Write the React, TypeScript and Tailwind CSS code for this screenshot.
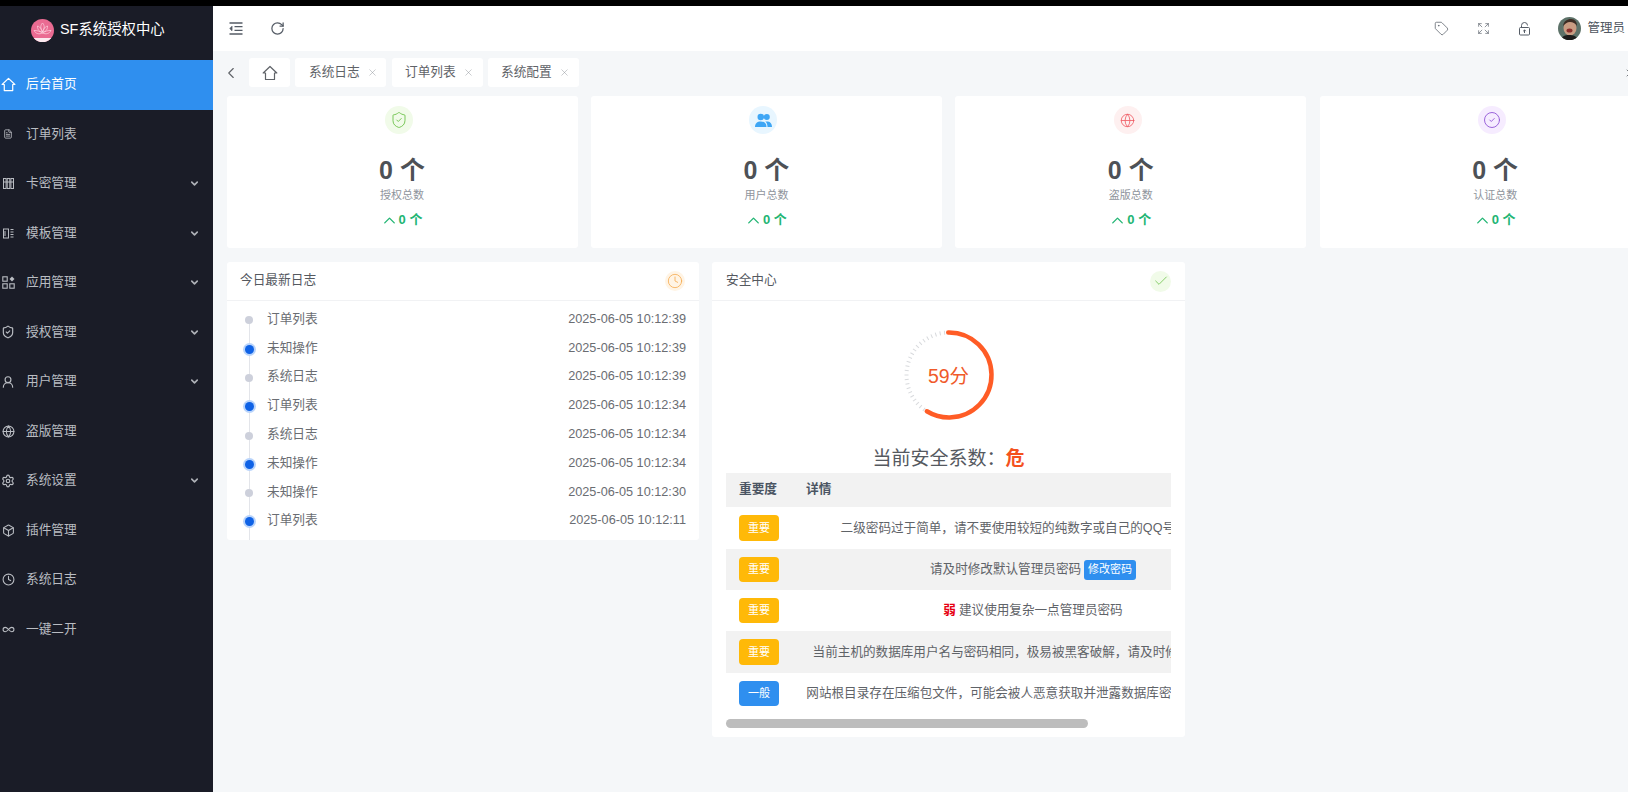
import {
  ChevronDown,
  ChevronLeft,
  ChevronUp,
  CircleCheck,
  Check,
  Clock,
  Expand,
  FileText,
  Globe,
  Infinity as InfinityIcon,
  RotateCw,
  Settings,
  ShieldCheck,
  Tag,
  UserRound,
  Box,
  X,
} from "lucide-react";

function HomeOutline({ size, sw = 1.2 }: { size: number; sw?: number }) {
  return (
    <svg width={size} height={size} viewBox="0 0 16 16" fill="none" stroke="currentColor" strokeWidth={sw} strokeLinejoin="round">
      <path d="M8 1.500L1.200 8h2.300v6.500h9V8h2.300z" />
    </svg>
  );
}

function OutdentIcon() {
  return (
    <svg width="14" height="13" viewBox="0 0 14 13" fill="none" stroke="currentColor" strokeWidth="1.300">
      <path d="M0.500 1h13M5.500 4.700h8M5.500 8.300h8M0.500 12h13" />
      <path d="M3 4.300L0.800 6.500 3 8.700z" fill="currentColor" strokeWidth="0.800" />
    </svg>
  );
}

function CardKeyIcon() {
  return (
    <svg width="11" height="11" viewBox="0 0 11 11" fill="none" stroke="currentColor" strokeWidth="1">
      <rect x="0.5" y="0.5" width="2.6" height="10" />
      <rect x="4.2" y="0.5" width="2.6" height="10" />
      <rect x="7.9" y="0.5" width="2.6" height="10" />
      <path d="M0.5 4h10" />
    </svg>
  );
}

function TemplateIcon() {
  return (
    <svg width="11" height="11" viewBox="0 0 11 11" fill="none" stroke="currentColor" strokeWidth="1">
      <rect x="0.5" y="1" width="5" height="9" />
      <path d="M7.500 1.500h3M7.500 4h3M7.500 6.500h3M7.500 9h3" />
      <path d="M2 3v5" />
    </svg>
  );
}

function AppsIcon() {
  return (
    <svg width="13" height="13" viewBox="0 0 13 13" fill="none" stroke="currentColor" strokeWidth="1.1">
      <rect x="0.8" y="0.8" width="4.4" height="4.4" />
      <rect x="0.8" y="7.8" width="4.4" height="4.4" />
      <rect x="7.8" y="7.8" width="4.4" height="4.4" />
      <path d="M10 0.5l2.5 2.5-2.5 2.5-2.5-2.5z" fill="currentColor" stroke="none" />
    </svg>
  );
}

function OpenLockIcon() {
  return (
    <svg width="13" height="14" viewBox="0 0 13 14" fill="none" stroke="#555c66" strokeWidth="1">
      <rect x="1.5" y="5.5" width="10" height="7.5" rx="1" />
      <path d="M3.500 5.500V3.500a3 3 0 0 1 6 0" />
      <path d="M6.500 11V8M5.200 9.200l1.300-1.300 1.300 1.300" />
    </svg>
  );
}

function LotusLogo() {
  return (
    <div className="relative h-[23px] w-[23px] overflow-hidden rounded-full bg-[#ea6b92]">
      <svg width="23" height="23" viewBox="0 0 23 23" fill="none" stroke="#ffd9e4" strokeWidth="0.7">
        <path d="M11.500 4c2 2 2.500 5 0 9-2.500-4-2-7 0-9z" />
        <path d="M6.500 7c2 .5 3.500 2 5 6-3 0-5-2-5-6zM16.500 7c-2 .5-3.500 2-5 6 3 0 5-2 5-6z" />
        <path d="M3 11.500c3 0 5.500.5 8.500 2.500-3.500 1.500-6.500 1-8.500-2.500zM20 11.500c-3 0-5.500.5-8.500 2.500 3.500 1.500 6.500 1 8.500-2.500z" />
      </svg>
      <div className="absolute bottom-0 left-0 h-[4px] w-full bg-[#fbeaf0]" />
    </div>
  );
}

function Avatar() {
  return (
    <svg width="23" height="23" viewBox="0 0 23 23" className="shrink-0 rounded-full">
      <rect width="23" height="23" fill="#5d7269" />
      <ellipse cx="12" cy="11" rx="6.500" ry="7.500" fill="#c99c82" />
      <path d="M5 9c1-5 4-7 8-7s6 3 6 7c-2-3-4-4-7-4s-5 2-7 4z" fill="#3d2d24" />
      <ellipse cx="11.500" cy="13.500" rx="3" ry="2" fill="#8a2f2c" />
      <path d="M3 23c1-4 4-5 8-5s8 1 9 5z" fill="#1d1c1b" />
    </svg>
  );
}

const menu = [
  { label: "后台首页", icon: <HomeOutline size={15} sw={1.300} />, active: true },
  { label: "订单列表", icon: <FileText size={10} /> },
  { label: "卡密管理", icon: <CardKeyIcon />, arrow: true },
  { label: "模板管理", icon: <TemplateIcon />, arrow: true },
  { label: "应用管理", icon: <AppsIcon />, arrow: true },
  { label: "授权管理", icon: <ShieldCheck size={14} />, arrow: true },
  { label: "用户管理", icon: <UserRound size={14} />, arrow: true },
  { label: "盗版管理", icon: <Globe size={13} /> },
  { label: "系统设置", icon: <Settings size={14} />, arrow: true },
  { label: "插件管理", icon: <Box size={13} /> },
  { label: "系统日志", icon: <Clock size={13} /> },
  { label: "一键二开", icon: <InfinityIcon size={13} /> },
];

const stats = [
  {
    label: "授权总数",
    bg: "bg-[#f1fbe9]",
    icon: <ShieldCheck size={18} strokeWidth={1.200} className="text-[#6cc24a]" />,
  },
  {
    label: "用户总数",
    bg: "bg-[#e8f6ff]",
    icon: (
      <svg width="17" height="15" viewBox="0 0 17 15" fill="#3ea6f5">
        <circle cx="5.800" cy="4" r="3.300" />
        <circle cx="11.800" cy="4" r="3" />
        <path d="M0 14c0-3.500 2-5.500 5.800-5.500s5.700 2 5.700 5.500z" />
        <path d="M12.500 14c0-2.500-.7-4.300-2.200-5.500 .6-.1 1-.1 1.500-.1 3.300 0 5.200 2 5.200 5.600z" />
      </svg>
    ),
  },
  {
    label: "盗版总数",
    bg: "bg-[#fef0f0]",
    icon: <Globe size={15} strokeWidth={1.300} className="text-[#ef5a62]" />,
  },
  {
    label: "认证总数",
    bg: "bg-[#f6ecff]",
    icon: <CircleCheck size={18} strokeWidth={1.200} className="text-[#9156d6]" />,
  },
];

const logs = [
  ["订单列表", "2025-06-05 10:12:39"],
  ["未知操作", "2025-06-05 10:12:39"],
  ["系统日志", "2025-06-05 10:12:39"],
  ["订单列表", "2025-06-05 10:12:34"],
  ["系统日志", "2025-06-05 10:12:34"],
  ["未知操作", "2025-06-05 10:12:34"],
  ["未知操作", "2025-06-05 10:12:30"],
  ["订单列表", "2025-06-05 10:12:11"],
];

function StatCard({ item }: { item: (typeof stats)[number] }) {
  return (
    <div className="flex h-[152px] flex-col items-center rounded-[3px] bg-white pt-[10px]">
      <div className={`-ml-[6px] flex h-[28px] w-[28px] items-center justify-center rounded-full ${item.bg}`}>{item.icon}</div>
      <div className="mt-[20px] text-[25px] leading-[32px] font-bold text-[#4d5156]">0 个</div>
      <div className="mt-[1px] text-[11px] leading-[16px] text-[#8f949c]">{item.label}</div>
      <div className="-ml-[2px] mt-[8px] flex h-[18px] items-center text-[13px] font-semibold text-[#22b573]">
        <ChevronUp size={19} strokeWidth={1.700} />
        <span>0 个</span>
      </div>
    </div>
  );
}

function ScoreRing() {
  const ticks = Array.from({ length: 24 }, (_, i) => 216 + i * 6);
  return (
    <svg width="96" height="96" viewBox="0 0 96 96">
      {ticks.map((deg) => (
        <line
          key={deg}
          x1="48"
          y1="3.500"
          x2="48"
          y2="7.500"
          stroke="#d8dadd"
          strokeWidth="1"
          transform={`rotate(${deg} 48 48)`}
        />
      ))}
      <circle
        cx="48"
        cy="48"
        r="42.500"
        fill="none"
        stroke="#ff5c26"
        strokeWidth="4.500"
        strokeLinecap="round"
        strokeDasharray="157.300 267"
        transform="rotate(-91 48 48)"
      />
    </svg>
  );
}

function Level({ blue, h = "h-[26px]" }: { blue?: boolean; h?: string }) {
  return (
    <span
      className={`flex w-[40px] items-center justify-center rounded-[4px] text-[11px] text-white ${h} ${
        blue ? "bg-[#2f8fef]" : "bg-[#ffb908]"
      }`}
    >
      {blue ? "一般" : "重要"}
    </span>
  );
}

function TableRow({ level, gray, h, children }: { level: React.ReactNode; gray?: boolean; h: string; children: React.ReactNode }) {
  return (
    <div className={`flex items-center ${h} ${gray ? "bg-[#f2f2f2]" : "bg-white"}`}>
      <div className="w-[67px] shrink-0 pl-[13px]">{level}</div>
      <div className="flex w-[480px] shrink-0 items-center justify-center whitespace-nowrap text-[12.600px] text-[#5f6368]">
        {children}
      </div>
    </div>
  );
}

export default function App() {
  return (
    <div className="h-[792px] w-full overflow-hidden bg-[#f5f7f9] [font-family:'Liberation_Sans','Noto_Sans_CJK_SC',sans-serif]">
      <div className="h-[6px] bg-black" />
      <div className="flex h-[786px]">
        <aside className="w-[213px] shrink-0 bg-[#1a1c27]">
          <div className="mb-[6px] flex h-[48px] items-center pl-[31px]">
            <LotusLogo />
            <span className="ml-[6px] text-[14.400px] text-white">SF系统授权中心</span>
          </div>
          {menu.map((m) => (
            <div
              key={m.label}
              className={`flex h-[49.500px] items-center text-[12.700px] ${
                m.active ? "bg-[#2f8fef] text-white" : "text-[#b9bcc2]"
              }`}
            >
              <span className="flex w-[16px] justify-center">{m.icon}</span>
              <span className="ml-[10px]">{m.label}</span>
              {m.arrow ? <ChevronDown size={11} strokeWidth={3.500} className="ml-auto mr-[13px] text-[#aeb1b7]" /> : null}
            </div>
          ))}
        </aside>

        <main className="min-w-0 flex-1 overflow-hidden">
          <header className="flex h-[45px] items-center bg-white text-[#555c66]">
            <span className="ml-[16px] flex">
              <OutdentIcon />
            </span>
            <RotateCw size={15} strokeWidth={2} className="ml-[27px]" />
            <Tag size={15} strokeWidth={1.200} className="ml-auto" />
            <Expand size={13} strokeWidth={1.200} className="ml-[28px]" />
            <span className="ml-[28px] flex">
              <OpenLockIcon />
            </span>
            <span className="ml-[27px] flex items-center">
              <Avatar />
            </span>
            <span className="ml-[6px] mr-[3px] text-[12.500px] text-[#4f5660]">管理员</span>
          </header>

          <div className="flex h-[45px] items-start pt-[7px] pl-[14px] text-[12.700px] text-[#5f6368]">
            <div className="flex h-[29px] w-[13px] items-center">
              <ChevronLeft size={18} strokeWidth={1.500} className="-ml-[5px]" />
            </div>
            <div className="ml-[9px] flex h-[29px] w-[41px] items-center justify-center rounded-[3px] bg-white">
              <HomeOutline size={16} />
            </div>
            {["系统日志", "订单列表", "系统配置"].map((t, i) => (
              <div
                key={t}
                className={`flex h-[29px] w-[91px] items-center rounded-[3px] bg-white ${i === 0 ? "ml-[5px] pl-[14px]" : i === 1 ? "ml-[6px] pl-[13px]" : "ml-[5px] pl-[13px]"}`}
              >
                <span>{t}</span>
                <X size={11} strokeWidth={1} className="ml-[7px] text-[#8a8f96]" />
              </div>
            ))}
            <div className="ml-auto -mr-[8px] flex h-[29px] items-center">
              <X size={12} strokeWidth={1.700} />
            </div>
          </div>

          <div className="pl-[14px]">
            <div className="-ml-[0.5px] grid w-[1460px] grid-cols-[repeat(4,351px)] gap-x-[13.400px]">
              {stats.map((s) => (
                <StatCard key={s.label} item={s} />
              ))}
            </div>

            <div className="mt-[14px] flex items-start gap-[13px]">
              <section className="w-[472px] rounded-[3px] bg-white">
                <div className="flex h-[39px] items-center justify-between border-b border-[#f1f2f4] pr-[14px] pl-[13px] text-[12.700px] text-[#55595f]">
                  <span>今日最新日志</span>
                  <span className="flex h-[20px] w-[20px] items-center justify-center rounded-full bg-[#fff4e5]">
                    <Clock size={16} strokeWidth={1.200} className="text-[#f5a94e]" />
                  </span>
                </div>
                <div className="relative h-[239px] pt-[4px]">
                  <div className="absolute top-[19px] bottom-0 left-[21.500px] w-[1px] bg-[#e3e5ea]" />
                  {logs.map(([name, time], i) => (
                    <div key={i} className="relative flex h-[28.800px] items-center pr-[13px] text-[12.700px] text-[#6a6d72]">
                      <span className="flex w-[44px] justify-center pt-[2px]">
                        {i % 2 === 1 ? (
                          <span className="h-[9px] w-[9px] rounded-full bg-[#0f62e6] ring-[2px] ring-[#b9d4fb]" />
                        ) : (
                          <span className="h-[8px] w-[8px] rounded-full bg-[#cdd0db]" />
                        )}
                      </span>
                      <span className="ml-[-4px]">{name}</span>
                      <span className="ml-auto">{time}</span>
                    </div>
                  ))}
                </div>
              </section>

              <section className="h-[475px] w-[473px] rounded-[3px] bg-white">
                <div className="flex h-[39px] items-center justify-between border-b border-[#f1f2f4] pr-[14px] pl-[14px] text-[12.700px] text-[#55595f]">
                  <span>安全中心</span>
                  <span className="flex h-[21px] w-[21px] items-center justify-center rounded-full bg-[#f1fbe9]">
                    <Check size={16} strokeWidth={1.200} className="text-[#6cc24a]" />
                  </span>
                </div>
                <div className="flex justify-center pt-[26px]">
                  <ScoreRing />
                </div>
                <div className="relative -mt-[59px] h-[24px] text-center text-[19.500px] leading-[24px] text-[#f05a2a]">59分</div>
                <div className="mt-[59px] flex h-[24px] items-center justify-center text-[19px] text-[#55595f]">
                  <span>当前安全系数：</span>
                  <b className="text-[#f4511e]">危</b>
                </div>
                <div className="mx-[14px] mt-[2px] overflow-hidden">
                  <div className="w-[547px]">
                    <div className="flex h-[34px] items-center bg-[#f2f2f2] text-[12.700px] font-bold text-[#4b5563]">
                      <span className="w-[80px] shrink-0 pl-[13px]">重要度</span>
                      <span>详情</span>
                    </div>
                    <TableRow h="h-[42px]" level={<Level />}>
                      二级密码过于简单，请不要使用较短的纯数字或自己的QQ号作为密码
                    </TableRow>
                    <TableRow h="h-[41px]" gray level={<Level h="h-[25px]" />}>
                      请及时修改默认管理员密码
                      <span className="ml-[3px] flex h-[20px] w-[52px] items-center justify-center rounded-[3px] bg-[#2f8fef] text-[11px] text-white">
                        修改密码
                      </span>
                    </TableRow>
                    <TableRow h="h-[41px]" level={<Level h="h-[25px]" />}>
                      <b className="mr-[3px] text-[#e60012]">弱</b>
                      建议使用复杂一点管理员密码
                    </TableRow>
                    <TableRow h="h-[42px]" gray level={<Level />}>
                      当前主机的数据库用户名与密码相同，极易被黑客破解，请及时修改数据库密码
                    </TableRow>
                    <TableRow h="h-[41px]" level={<Level blue h="h-[25px]" />}>
                      网站根目录存在压缩包文件，可能会被人恶意获取并泄露数据库密码等重要的信息
                    </TableRow>
                  </div>
                </div>
                <div className="mx-[14px] mt-[5px] h-[9px] w-[362px] rounded-full bg-[#bdbdbd]" />
              </section>
            </div>
          </div>
        </main>
      </div>
    </div>
  );
}
